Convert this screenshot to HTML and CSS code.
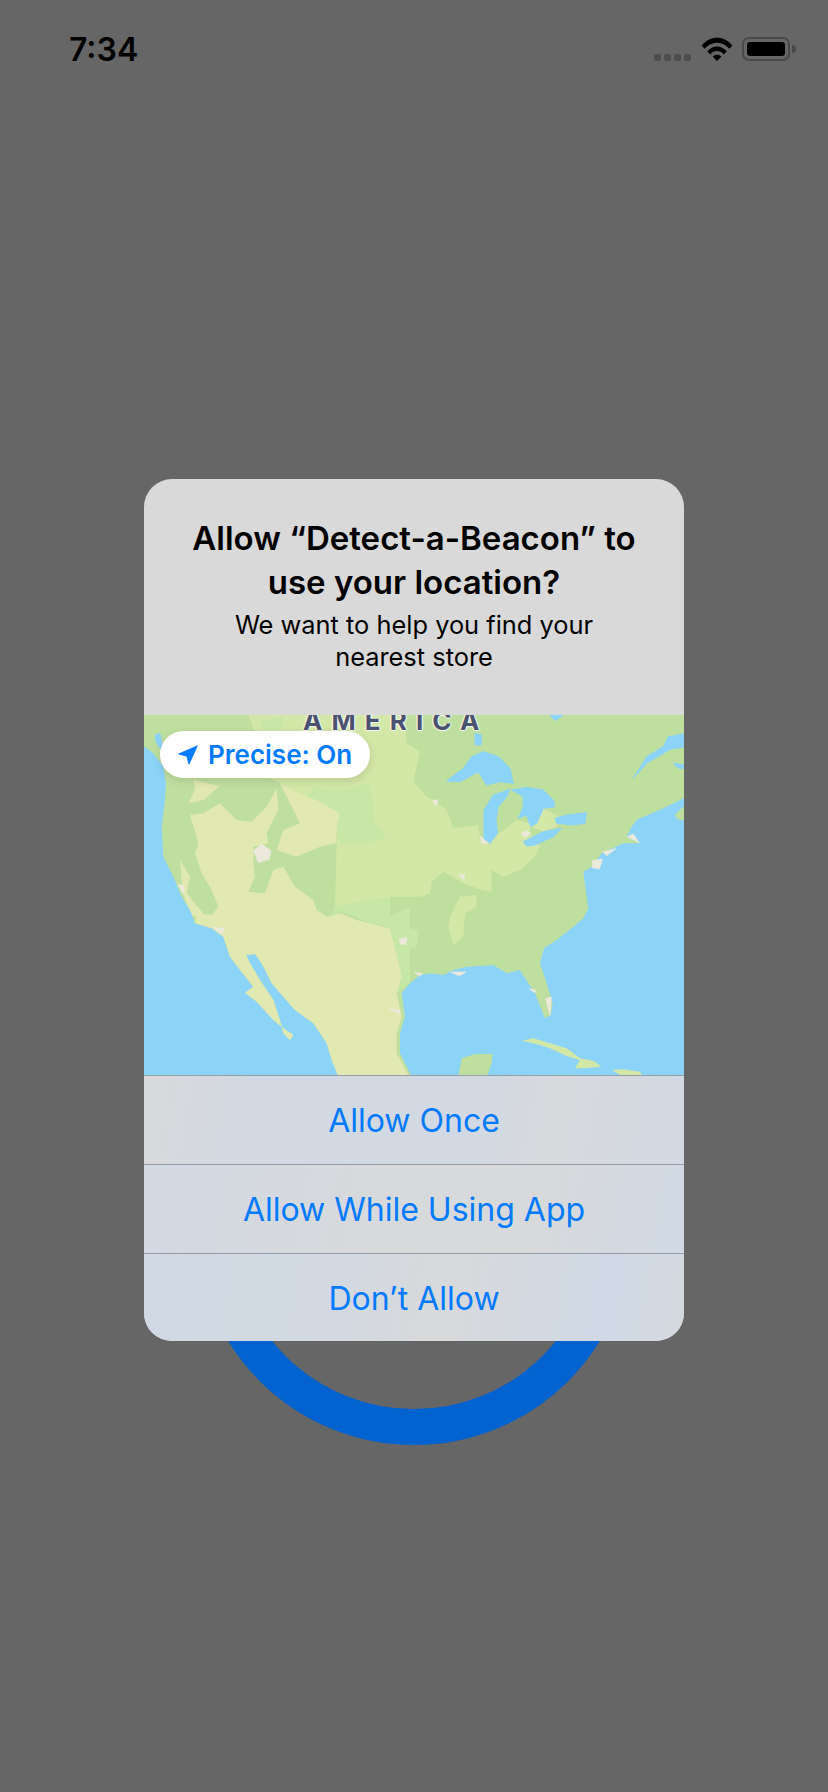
FILE: index.html
```html
<!DOCTYPE html>
<html lang="en">
<head>
<meta charset="utf-8">
<title>Location permission</title>
<link rel="stylesheet" href="styles.css">
</head>
<body>
<div class="screen">
  <header class="status">
    <span class="time">7:34</span>
    <div class="indicators">
      <div class="signal"><i></i><i></i><i></i><i></i></div>
      <svg class="wifi" viewBox="0 0 32 24" aria-hidden="true">
        <path d="M0.6 8.6 C9 -1.8 23 -1.8 31.4 8.6 L28.4 11.8 C21.6 3.8 10.4 3.8 3.6 11.8 Z"/>
        <path d="M6.2 14.3 C11.6 8 20.4 8 25.8 14.3 L22.8 17.4 C18.8 13 13.2 13 9.2 17.4 Z"/>
        <path d="M11.6 19.6 C14.2 17 17.8 17 20.4 19.6 L16 24 Z"/>
      </svg>
      <div class="battery"><div class="battery-fill"></div></div>
      <div class="battery-nub"></div>
    </div>
  </header>

  <div class="ring"></div>

  <section class="dialog">
    <div class="dialog-head">
      <h1 class="title">Allow “Detect-a-Beacon” to<br>use your location?</h1>
      <p class="message">We want to help you find your<br>nearest store</p>
    </div>

    <div class="map">
      <svg class="map-art" viewBox="12 45 1620 1080" preserveAspectRatio="none" aria-hidden="true">
        <rect class="ocean" x="0" y="0" width="1700" height="1200"/>
        <!-- continent -->
        <path class="land" d="M0 0 L1640 0 L1640 290 L1580 320 L1490 360 L1472 385 L1460 410 L1500 430 L1450 430 L1385 460 L1355 500 L1330 515 L1340 590 L1345 625 L1330 655 L1300 680 L1250 720 L1212 745 L1200 790 L1220 850 L1238 910 L1232 945 L1215 955 L1205 930 L1185 880 L1165 850 L1140 810 L1100 820 L1060 795 L980 800 L940 810 L910 825 L870 820 L840 825 L810 850 L785 880 L795 950 L780 1000 L780 1060 L815 1130 L595 1130 L575 1080 L560 1030 L520 970 L465 930 L430 890 L395 850 L365 790 L345 762 L318 765 L330 790 L360 840 L400 900 L420 960 L430 1000 L450 1020 L460 1005 L430 985 L400 960 L350 905 L315 878 L340 860 L300 810 L270 770 L250 710 L215 685 L165 670 L150 630 L125 590 L100 530 L70 470 L65 380 L75 300 L78 250 L70 200 L40 160 L0 130 Z"/>
        <!-- central plains -->
        <path class="land-light" d="M325 45 L795 45 L800 130 L840 155 L820 245 L860 290 L880 300 L920 330 L940 385 L1015 375 L1020 420 L1050 435 L1075 400 L1100 385 L1130 360 L1170 370 L1170 400 L1200 440 L1185 470 L1140 510 L1090 530 L1055 510 L1055 575 L1025 570 L970 550 L910 515 L875 545 L870 580 L840 590 L750 590 L585 620 L590 430 L600 340 L500 290 L420 250 L380 230 L350 110 Z"/>
        <path class="land-light" d="M1175 380 L1210 325 L1260 350 L1250 380 L1210 395 Z"/>
        <path class="land-light" d="M930 650 L960 590 L1010 585 L1010 620 L975 640 L970 710 L940 735 L925 680 Z"/>
        <!-- south-west -->
        <path class="land-pale" d="M150 345 L190 340 L240 310 L290 360 L335 365 L380 320 L410 265 L415 330 L380 400 L385 430 L340 440 L340 490 L345 530 L325 575 L375 580 L400 510 L430 500 L465 560 L520 600 L530 630 L560 650 L600 640 L650 660 L690 670 L750 685 L770 760 L790 830 L770 880 L785 950 L770 1000 L770 1060 L808 1130 L595 1130 L575 1080 L560 1030 L520 970 L465 930 L430 890 L395 850 L365 790 L345 762 L318 765 L330 790 L360 840 L400 900 L420 960 L430 1000 L450 1020 L460 1005 L430 985 L400 960 L350 905 L315 878 L340 860 L300 810 L270 770 L250 710 L215 685 L165 670 L170 640 L215 645 L235 620 L215 570 L185 520 L165 460 L175 430 Z"/>
        <path class="land-pale" d="M120 480 L150 530 L140 580 L190 640 L160 650 L135 600 L125 540 Z"/>
        <path class="land-pale" d="M160 240 L240 258 L190 300 L145 310 L165 270 Z"/>
        <path class="land-pale" d="M420 250 L480 280 L530 300 L600 340 L590 400 L590 430 L540 440 L470 470 L410 450 L430 390 L480 370 L450 310 Z"/>
        <!-- brighter greens -->
        <path class="land-bright" d="M500 290 L520 260 L580 270 L615 270 L690 250 L700 320 L700 360 L740 410 L690 430 L600 430 L590 380 L600 340 L530 300 Z"/>
        <path class="land-bright" d="M585 620 L750 590 L750 680 L690 670 L650 650 L600 635 L570 650 Z"/>
        <path class="land-bright" d="M745 650 L810 620 L810 850 L770 880 L785 830 L770 760 L750 690 Z"/>
        <path class="land-bright" d="M810 685 L835 690 L830 740 L810 745 Z"/>
        <path class="land-bright" d="M360 65 L430 50 L425 90 L370 88 Z"/>
        <!-- lakes -->
        <g class="water">
          <path d="M920 243 L970 205 L995 170 L1030 155 L1075 170 L1110 205 L1120 250 L1080 245 L1040 255 L1015 215 L960 245 Z"/>
          <path d="M1032 330 L1060 285 L1110 268 L1100 290 L1075 320 L1068 360 L1072 400 L1050 430 L1032 420 Z"/>
          <path d="M1115 270 L1160 262 L1210 270 L1240 300 L1245 320 L1210 325 L1190 370 L1172 380 L1160 345 L1135 355 L1150 320 L1150 290 Z"/>
          <path d="M1150 425 L1210 395 L1265 385 L1240 410 L1185 435 L1160 438 Z"/>
          <path d="M1245 355 L1280 345 L1340 338 L1335 370 L1300 375 L1250 370 Z"/>
          <path d="M1005 100 L1025 105 L1023 135 L1005 135 Z"/>
          <path d="M1230 45 L1270 45 L1245 62 Z"/>
          <path d="M1640 100 L1585 110 L1570 140 L1520 170 L1480 235 L1520 190 L1590 148 L1640 140 Z"/>
          <path d="M1600 190 L1640 195 L1640 205 L1615 205 Z"/>
          <path d="M45 105 L60 100 L65 130 L80 145 L60 145 L48 125 Z"/>
        </g>
        <path class="land" d="M1605 345 L1640 310 L1640 362 L1612 358 Z"/>
        <!-- urban areas -->
        <g class="urban">
          <path d="M340 452 L365 432 L393 452 L388 478 L355 488 Z"/>
          <path d="M114 554 L133 556 L130 583 Z"/>
          <path d="M218 681 L255 686 L245 702 Z"/>
          <path d="M777 716 L801 713 L798 733 L782 733 Z"/>
          <path d="M746 926 L778 931 L780 943 Z"/>
          <path d="M880 300 L893 300 L893 313 L882 313 Z"/>
          <path d="M1020 408 L1046 430 L1026 430 Z"/>
          <path d="M1143 400 L1160 392 L1172 400 L1155 412 Z"/>
          <path d="M957 524 L973 524 L973 542 Z"/>
          <path d="M1388 455 L1428 446 L1400 467 Z"/>
          <path d="M1357 482 L1388 477 L1378 507 L1357 503 Z"/>
          <path d="M1462 410 L1480 402 L1498 428 Z"/>
          <path d="M1167 866 L1188 871 L1184 878 Z"/>
          <path d="M1217 896 L1234 892 L1230 945 Z"/>
          <path d="M822 816 L848 821 L838 828 Z"/>
          <path d="M932 816 L978 816 L958 828 Z"/>
        </g>
        <!-- islands -->
        <path class="land-light" d="M1145 1022 L1180 1015 L1230 1030 L1280 1045 L1320 1075 L1360 1082 L1385 1100 L1330 1105 L1305 1105 L1320 1080 L1280 1068 L1230 1045 L1180 1030 Z"/>
        <path class="land" d="M955 1130 L965 1075 L1005 1062 L1058 1062 L1055 1090 L1040 1130 Z"/>
        <path class="land-light" d="M1415 1110 L1450 1108 L1500 1115 L1508 1130 L1450 1130 Z"/>
      </svg>
      <div class="map-label">AMERICA</div>
      <div class="precise">
        <svg class="arrow" viewBox="0 0 20 20" aria-hidden="true">
          <path d="M19.4 0.8 L11 19.2 L8.8 11.2 L0.6 9 Z" stroke-linejoin="round"/>
        </svg>
        <span>Precise: On</span>
      </div>
    </div>

    <div class="actions">
      <button class="action action-a">Allow Once</button>
      <button class="action action-b">Allow While Using App</button>
      <button class="action action-c">Don’t Allow</button>
    </div>
  </section>
</div>
</body>
</html>
```

FILE: styles.css
```css
* { box-sizing: border-box; }

html, body {
  margin: 0;
  padding: 0;
  background: #666666;
}

.screen {
  position: relative;
  width: 828px;
  height: 1792px;
  overflow: hidden;
  background: #666666;
  font-family: Inter, "Liberation Sans", sans-serif;
}

.status {
  display: flex;
  justify-content: space-between;
  align-items: flex-start;
  height: 479px;
  padding: 31px 32px 0 69px;
}

.time {
  font-size: 32px;
  line-height: 38px;
  font-weight: 600;
  color: #000;
}

.indicators {
  display: flex;
  align-items: flex-start;
  padding-top: 6px;
}

.signal {
  display: flex;
  gap: 3px;
  margin-top: 17px;
  margin-right: 10px;
}

.signal i {
  display: block;
  width: 7px;
  height: 7px;
  border-radius: 2px;
  background: #4d4d4d;
}

.wifi {
  width: 32px;
  height: 24px;
  margin-right: 9px;
  fill: #000;
}

.battery {
  width: 48px;
  height: 24px;
  padding: 3px;
  border: 2px solid #494949;
  border-radius: 7px;
}

.battery-fill {
  width: 100%;
  height: 100%;
  border-radius: 3px;
  background: #000;
}

.battery-nub {
  width: 4px;
  height: 8px;
  margin: 8px 0 0 2px;
  border-radius: 0 4px 4px 0;
  background: #494949;
}

.ring {
  position: absolute;
  left: 196px;
  top: 1009px;
  width: 436px;
  height: 436px;
  border: 36px solid #0063cf;
  border-radius: 50%;
}

.dialog {
  position: relative;
  width: 540px;
  height: 862px;
  margin-left: 144px;
  overflow: hidden;
  border-radius: 28px;
  background: #d9d9d9;
}

.dialog-head {
  height: 236px;
  padding-top: 37px;
  text-align: center;
  color: #000;
}

.title {
  margin: 0;
  font-size: 33px;
  line-height: 44px;
  font-weight: 600;
}

.message {
  margin: 5px 0 0;
  font-size: 25.4px;
  line-height: 32px;
  font-weight: 400;
}

.map {
  position: relative;
  height: 360px;
  overflow: hidden;
}

.map-art {
  display: block;
  width: 540px;
  height: 360px;
}

.ocean { fill: #8bd4f8; }
.land { fill: #bfdf9f; }
.land-light { fill: #d3e7a6; }
.land-pale { fill: #e1e8b0; }
.land-bright { fill: #c6e7a6; }

.water path {
  fill: #8bd4f8;
  stroke: #8bd4f8;
  stroke-width: 3;
  stroke-linejoin: round;
}

.urban path {
  fill: #ece8dc;
  stroke: #ece8dc;
  stroke-width: 2;
  stroke-linejoin: round;
}

.map-label {
  position: absolute;
  left: 159px;
  top: -9px;
  font-size: 26px;
  line-height: 30px;
  font-weight: 700;
  letter-spacing: 9.1px;
  color: #4a5270;
  text-shadow: 0 0 2px #fff, 1px 0 1px #f4f6ee, -1px 0 1px #f4f6ee, 0 1px 1px #f4f6ee;
}

.precise {
  position: absolute;
  left: 16px;
  top: 16px;
  display: flex;
  align-items: center;
  gap: 10px;
  width: 210px;
  height: 47px;
  padding-left: 18px;
  border-radius: 24px;
  background: #fff;
  box-shadow: 0 3px 10px rgba(0, 0, 0, 0.12);
  color: #007aff;
  font-size: 26px;
  font-weight: 600;
}

.arrow {
  width: 20px;
  height: 20px;
  fill: #007aff;
  stroke: #007aff;
  stroke-width: 0.8;
}

.actions {
  display: flex;
  flex-direction: column;
}

.action {
  display: block;
  width: 100%;
  height: 89px;
  padding: 0;
  border: 0;
  border-top: 1px solid #979ca6;
  color: #007aff;
  font-family: inherit;
  font-size: 32px;
  font-weight: 400;
  text-align: center;
}

.action-a { background: linear-gradient(100deg, #d8d9da 0%, #d2d9e3 22%, #d2d9e3 60%, #d7d9dc 75%, #d2d9e3 100%); }
.action-b { background: linear-gradient(100deg, #d2d9e3 0%, #d8d9da 50%, #d8d9da 70%, #d0d9e5 100%); }
.action-c { background: linear-gradient(100deg, #d0d9e4 0%, #d2d9e2 35%, #d8d9da 55%, #cfd9e6 85%, #d5d9de 100%); }
```
